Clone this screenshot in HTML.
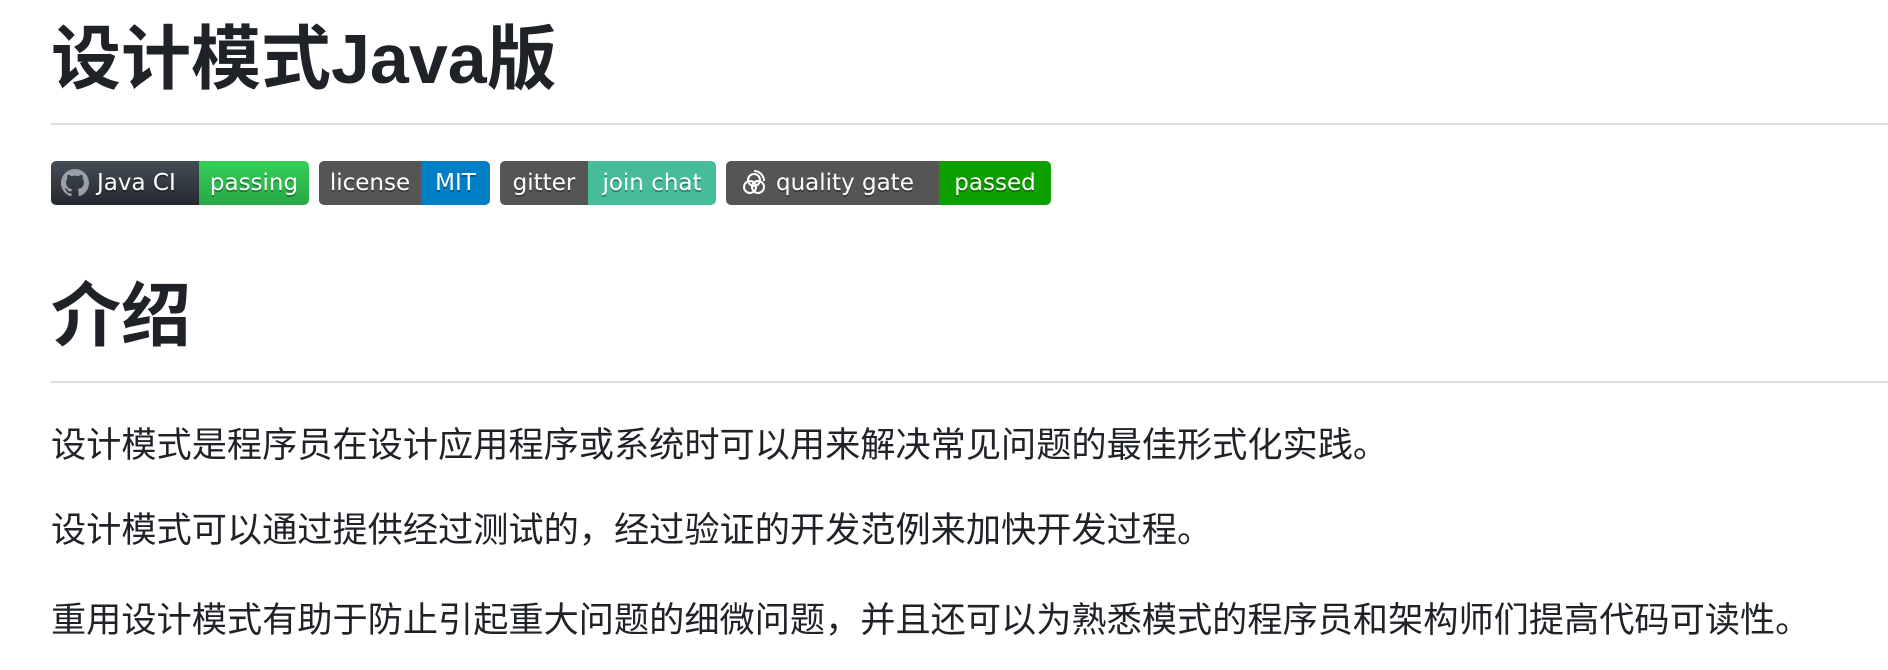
<!DOCTYPE html>
<html><head><meta charset="utf-8"><style>
body{margin:0;width:1888px;height:670px;background:#fff;overflow:hidden;font-family:"Liberation Sans","Noto Sans CJK SC",sans-serif;color:#1f2328;position:relative}
.a{position:absolute;white-space:nowrap}
h1{margin:0;font-size:70px;font-weight:700;line-height:1}
.hr{position:absolute;left:51px;right:0;height:2px;background:#d8dee4}
.b{position:absolute;top:161px;height:44px;border-radius:5px;overflow:hidden;display:flex;font-family:"DejaVu Sans",Verdana,sans-serif;font-size:23px;color:#fff;line-height:44px;text-shadow:0 2px 0 rgba(0,0,0,.3)}
.b span{display:block;padding:0;text-align:center}
p{margin:0;font-size:35.2px;line-height:1}
</style></head><body>
<h1 class="a" style="left:51px;top:24px">设计模式Java版</h1>
<div class="hr" style="top:123px"></div>

<div class="b" style="left:51px;width:258px">
 <span style="width:148px;box-sizing:border-box;background:linear-gradient(#444d56,#24292e);padding:0 0 0 10px;display:flex;align-items:center;gap:8px"><svg width="28" height="28" viewBox="0 0 16 16"><path fill="#9aa0a6" d="M8 0C3.6 0 0 3.6 0 8c0 3.5 2.3 6.5 5.5 7.6.4.1.5-.2.5-.4v-1.4c-2.2.5-2.7-1-2.7-1-.4-.9-.9-1.2-.9-1.2-.7-.5.1-.5.1-.5.8.1 1.2.8 1.2.8.7 1.2 1.9.9 2.3.7.1-.5.3-.9.5-1.1-1.8-.2-3.6-.9-3.6-4 0-.9.3-1.6.8-2.1-.1-.2-.4-1 .1-2.1 0 0 .7-.2 2.2.8.6-.2 1.300-.3 2-.3s1.4.1 2 .3c1.5-1 2.2-.8 2.2-.8.4 1.1.2 1.9.1 2.1.5.6.8 1.3.8 2.1 0 3.1-1.9 3.7-3.6 3.9.3.3.5.8.5 1.5v2.2c0 .2.1.5.6.4C13.7 14.5 16 11.5 16 8c0-4.4-3.6-8-8-8z"/></svg>Java CI</span>
 <span style="flex:1;background:linear-gradient(#34d058,#28a745)">passing</span>
</div>
<div class="b" style="left:319px;width:171px">
 <span style="width:102px;background:#555">license</span>
 <span style="flex:1;background:#007ec6">MIT</span>
</div>
<div class="b" style="left:500px;width:216px">
 <span style="width:88px;background:#555">gitter</span>
 <span style="flex:1;background:#46bc99">join chat</span>
</div>
<div class="b" style="left:726px;width:325px">
 <span style="width:213px;background:#555;display:flex;align-items:center;gap:8px;padding-left:14px;box-sizing:border-box"><svg width="28" height="28" viewBox="0 0 28 28" fill="none" stroke="#fff" stroke-width="2"><circle cx="10" cy="18" r="6"/><circle cx="18" cy="18" r="6"/><circle cx="14" cy="11" r="6"/><path d="M14 2a10 10 0 0 1 10 10"/></svg>quality gate</span>
 <span style="flex:1;background:#0d9e00">passed</span>
</div>

<h1 class="a" style="left:51px;top:281px">介绍</h1>
<div class="hr" style="top:381px"></div>

<p class="a" style="left:51px;top:428px">设计模式是程序员在设计应用程序或系统时可以用来解决常见问题的最佳形式化实践。</p>
<p class="a" style="left:51px;top:513px">设计模式可以通过提供经过测试的，经过验证的开发范例来加快开发过程。</p>
<p class="a" style="left:51px;top:603px">重用设计模式有助于防止引起重大问题的细微问题，并且还可以为熟悉模式的程序员和架构师们提高代码可读性。</p>
</body></html>
